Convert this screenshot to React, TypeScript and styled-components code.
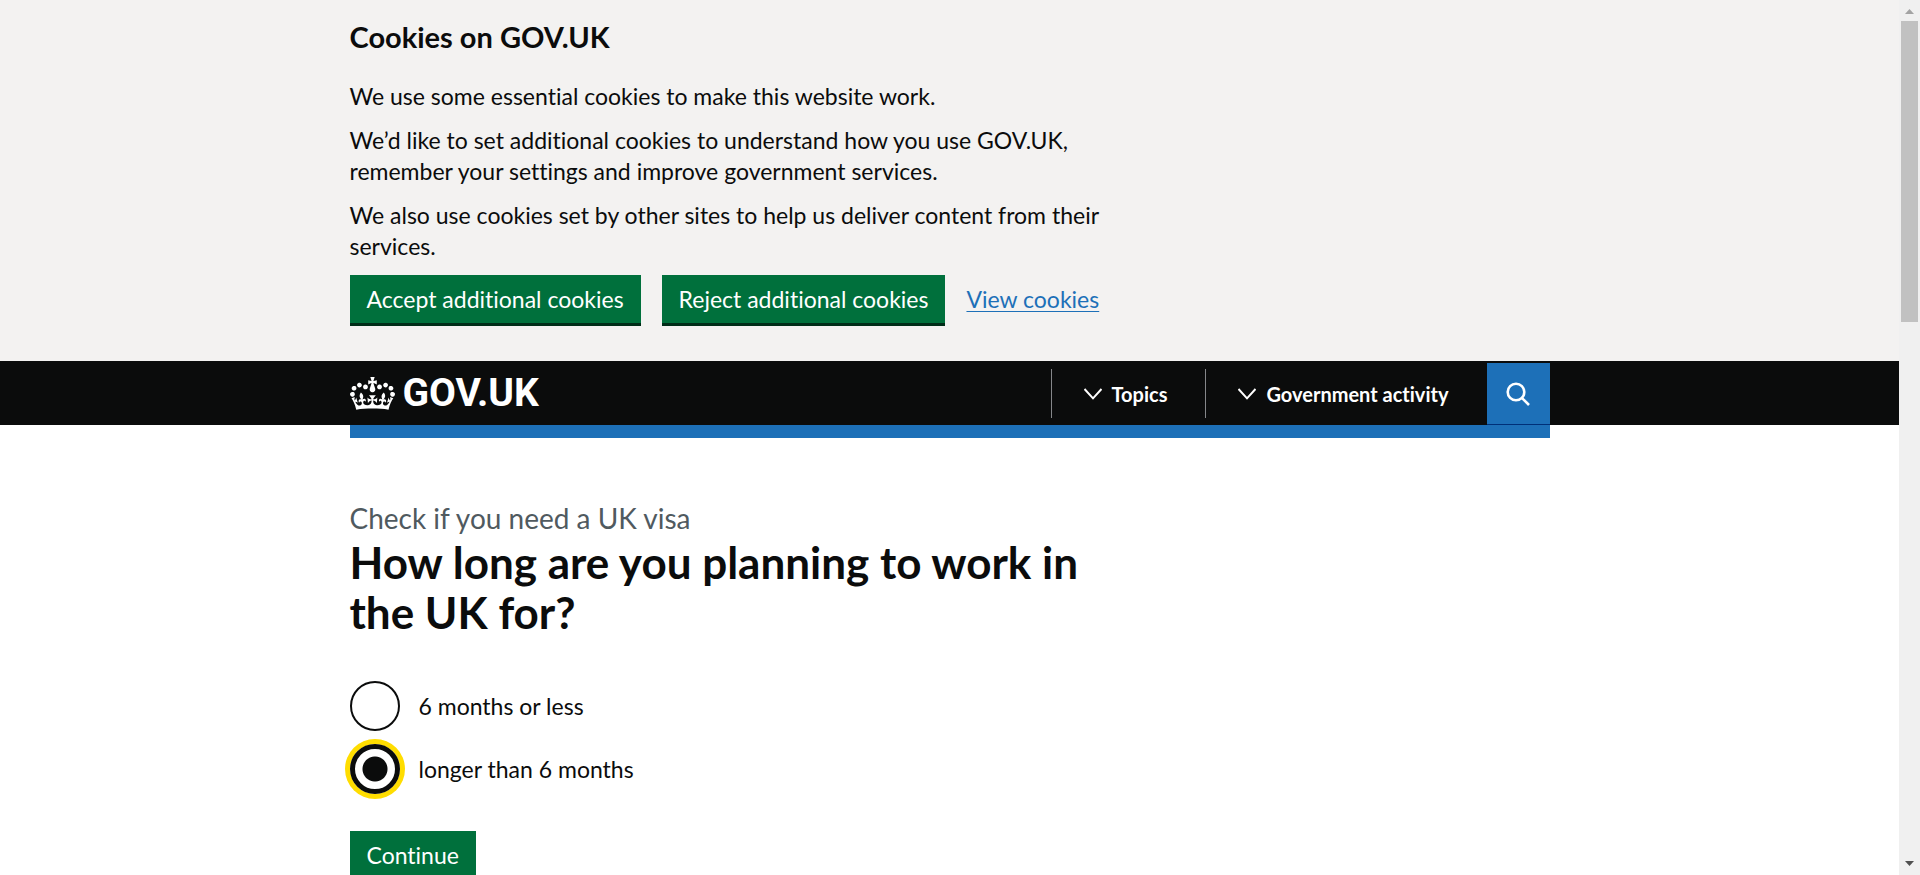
import React, { useState } from 'react';
import styled, { createGlobalStyle, css } from 'styled-components';

const colour = {
  black: '#0b0c0c',
  blue: '#1d70b8',
  green: '#00703c',
  grey: '#f3f2f1',
  secondary: '#505a5f',
  focus: '#ffdd00',
};

const GlobalStyle = createGlobalStyle`
  *, *::before, *::after { box-sizing: border-box; }
  body {
    margin: 0;
    color: ${colour.black};
    background: #fff;
    font-family: Lato, "Liberation Sans", sans-serif;
    font-size: 23px;
    line-height: 31px;
    font-variant-ligatures: none;
  }
`;

const Shell = styled.div`
  display: flex;
  height: 100vh;
  overflow: hidden;
`;

const Page = styled.div`
  flex: 1;
  min-width: 0;
  overflow: hidden;
`;

const Container = styled.div`
  max-width: 1200px;
  margin: 0 auto;
`;

const Banner = styled.section`
  padding: 18px 0 38px;
  background: ${colour.grey};
`;

const BannerText = styled.div`
  max-width: 780px;
`;

const BannerTitle = styled.h2`
  margin: 0 0 25px;
  font-size: 29px;
  line-height: 38px;
`;

const Paragraph = styled.p`
  margin: 0 0 13px;
`;

const ButtonRow = styled.div`
  display: flex;
  align-items: center;
  flex-wrap: wrap;
  gap: 21px;
`;

const Button = styled.button`
  padding: 9px 17px 8px;
  border: 0;
  color: #fff;
  background: ${colour.green};
  box-shadow: 0 3px 0 #002d18;
  font: inherit;
  font-variant-ligatures: none;
  cursor: pointer;
`;

const Link = styled.a`
  color: ${colour.blue};
  text-decoration: underline 1px;
  text-underline-offset: 3px;
`;

const Header = styled.header`
  background: ${colour.black};
`;

const HeaderRow = styled(Container)`
  display: flex;
  align-items: stretch;
  justify-content: space-between;
  height: 64px;
`;

const Logo = styled.a`
  display: flex;
  align-items: center;
  gap: 8px;
  color: #fff;
  font-family: Roboto, "Liberation Sans", sans-serif;
  font-size: 39px;
  line-height: 64px;
  font-weight: 700;
  text-decoration: none;
`;

const Nav = styled.nav`
  display: flex;
  align-items: center;
`;

const NavButton = styled.button`
  display: flex;
  align-items: center;
  gap: 10px;
  height: 49px;
  padding: 2px 38px 0 32px;
  border: 0;
  border-left: 1px solid #85878a;
  color: #fff;
  background: none;
  font: inherit;
  font-variant-ligatures: none;
  font-size: 20px;
  font-weight: 700;
  cursor: pointer;
`;

const SearchButton = styled.button`
  display: flex;
  align-items: center;
  justify-content: center;
  align-self: stretch;
  width: 63px;
  margin-top: 2px;
  padding: 0;
  border: 0;
  border-bottom: 1px solid #003078;
  background: ${colour.blue};
  cursor: pointer;
`;

const BlueBar = styled(Container)`
  height: 13px;
  background: ${colour.blue};
`;

const Main = styled.main`
  padding: 61px 0 75px;
`;

const Question = styled.form`
  max-width: 780px;
`;

const Caption = styled.span`
  display: block;
  color: ${colour.secondary};
  font-size: 28px;
  line-height: 38px;
`;

const Title = styled.h1`
  margin: 0 0 44px;
  font-size: 44px;
  line-height: 50px;
`;

const Options = styled.div`
  display: flex;
  flex-direction: column;
  align-items: flex-start;
  gap: 13px;
  margin-bottom: 37px;
`;

const Option = styled.label`
  display: flex;
  align-items: center;
  gap: 19px;
  cursor: pointer;
`;

const chosen = css`
  border-width: 5px;
  box-shadow: 0 0 0 5px ${colour.focus};
  background: radial-gradient(circle, ${colour.black} 12px, #fff 13px);
`;

const Radio = styled.input<{ $chosen: boolean }>`
  appearance: none;
  width: 50px;
  height: 50px;
  margin: 0;
  border: 2px solid ${colour.black};
  border-radius: 50%;
  outline: 0;
  background: #fff;
  cursor: pointer;
  ${(p) => p.$chosen && chosen}
`;

const ScrollTrack = styled.div`
  display: flex;
  flex-direction: column;
  align-items: center;
  flex: 0 0 21px;
  background: #f0f0f0;
`;

const ScrollThumb = styled.div`
  width: 17px;
  height: 301px;
  margin-bottom: auto;
  background: #c1c1c1;
`;

const Arrow = styled.svg`
  width: 21px;
  height: 21px;
`;

const Crown = () => (
  <svg width="45" height="33" viewBox="0 0 132 97" fill="#fff" aria-hidden="true">
    <path d="M25 30.2c3.5 1.5 7.7-.2 9.1-3.7 1.5-3.6-.2-7.8-3.9-9.2-3.6-1.4-7.6.3-9.1 3.9-1.4 3.5.3 7.5 3.9 9zM9 39.5c3.6 1.5 7.8-.2 9.2-3.7 1.5-3.6-.2-7.8-3.9-9.1-3.6-1.5-7.6.2-9.1 3.8-1.4 3.5.3 7.5 3.8 9zM4.4 57.2c3.5 1.5 7.7-.2 9.1-3.8 1.5-3.6-.2-7.7-3.9-9.1-3.5-1.5-7.6.3-9.1 3.8-1.4 3.5.3 7.6 3.9 9.1zm38.3-21.4c3.5 1.5 7.7-.2 9.1-3.8 1.5-3.6-.2-7.7-3.9-9.1-3.6-1.5-7.6.3-9.1 3.8-1.3 3.6.4 7.7 3.9 9.1zm64.4-5.6c-3.6 1.5-7.8-.2-9.1-3.7-1.5-3.6.2-7.8 3.8-9.2 3.6-1.4 7.7.3 9.2 3.9 1.3 3.5-.4 7.5-3.9 9zm15.9 9.3c-3.6 1.5-7.7-.2-9.1-3.7-1.5-3.6.2-7.8 3.7-9.1 3.6-1.5 7.7.2 9.2 3.8 1.5 3.5-.3 7.5-3.8 9zm4.7 17.7c-3.6 1.5-7.8-.2-9.2-3.8-1.5-3.6.2-7.7 3.9-9.1 3.6-1.5 7.7.3 9.2 3.8 1.3 3.5-.4 7.6-3.9 9.1zM89.3 35.8c-3.6 1.5-7.8-.2-9.2-3.8-1.4-3.6.2-7.7 3.9-9.1 3.6-1.5 7.7.3 9.2 3.8 1.4 3.6-.3 7.7-3.9 9.1zM69.7 17.7l8.9 4.7V9.3l-8.9 2.8c-.2-.3-.5-.6-.9-.9L72.4 0H59.6l3.5 11.2c-.3.3-.6.5-.9.9l-8.8-2.8v13.1l8.8-4.7c.3.3.6.7.9.9l-5 15.4v.1c-.2.8-.4 1.6-.4 2.4 0 4.1 3.1 7.5 7 8.1h.2c.3 0 .7.1 1 .1.4 0 .7 0 1-.1h.2c4-.6 7.1-4.1 7.1-8.1 0-.8-.1-1.7-.4-2.4V34l-5.1-15.4c.4-.2.7-.6 1-.9zM66 92.8c16.9 0 32.8 1.1 47.1 3.2 4-16.9 8.9-26.7 14-33.5l-9.6-3.4c1 4.9 1.1 7.2 0 10.2-1.5-1.4-3-4.3-4.2-8.7L108.6 76c2.8-2 5-3.2 7.5-3.3-4.4 9.4-10 11.9-13.6 11.2-4.3-.8-6.3-4.6-5.6-7.9 1-4.7 5.7-5.9 8-.5 4.3-8.7-3-11.4-7.6-8.8 7.1-7.2 7.9-13.5 2.1-21.1-8 6.1-8.1 12.3-4.5 20.8-4.7-5.4-12.1-2.5-9.5 6.2 3.4-5.2 7.9-2 7.2 3.1-.6 4.3-6.4 7.8-13.5 7.2-10.3-.9-10.9-8-11.2-13.8 2.5-.5 7.1 1.8 11 7.3L80.2 60c-4.1 4.4-8 5.3-12.3 5.4 1.4-4.4 8-11.6 8-11.6H55.5s6.4 7.2 7.9 11.6c-4.2-.1-8-1-12.3-5.4l1.4 16.4c3.9-5.5 8.5-7.7 10.9-7.3-.3 5.8-.9 12.8-11.1 13.8-7.2.6-12.9-2.9-13.5-7.2-.7-5 3.8-8.3 7.1-3.1 2.7-8.7-4.6-11.6-9.4-6.2 3.7-8.5 3.6-14.7-4.6-20.8-5.8 7.6-5 13.9 2.2 21.1-4.7-2.6-11.9.1-7.7 8.8 2.3-5.5 7.1-4.2 8.1.5.7 3.3-1.3 7.1-5.7 7.9-3.5.7-9-1.8-13.5-11.2 2.5.1 4.7 1.3 7.5 3.3l-4.7-15.4c-1.2 4.4-2.7 7.2-4.3 8.7-1.1-3-.9-5.3 0-10.2l-9.5 3.4c5 6.9 9.9 16.7 14 33.5 14.8-2.1 30.8-3.2 47.7-3.2z" />
  </svg>
);

const Chevron = () => (
  <svg width="18" height="12" viewBox="0 0 18 12" fill="none" stroke="#fff" strokeWidth="2" aria-hidden="true">
    <path d="M0.500 1l8.500 9.300 8.500-9.300" />
  </svg>
);

const SearchIcon = () => (
  <svg width="24" height="24" viewBox="0 0 24 24" fill="none" stroke="#fff" strokeWidth="2.6" aria-hidden="true">
    <circle cx="10" cy="10" r="8.3" />
    <path d="M15.8 15.8l7.2 7.2" />
  </svg>
);

const durations = ['6 months or less', 'longer than 6 months'];

export default function App() {
  const [duration, setDuration] = useState(durations[1]);

  return (
    <>
      <GlobalStyle />
      <Shell>
        <Page>
          <Banner aria-label="Cookies on GOV.UK">
            <Container>
              <BannerText>
                <BannerTitle>Cookies on GOV.UK</BannerTitle>
                <Paragraph>We use some essential cookies to make this website work.</Paragraph>
                <Paragraph>
                  We’d like to set additional cookies to understand how you use GOV.UK, remember your settings and
                  improve government services.
                </Paragraph>
                <Paragraph>
                  We also use cookies set by other sites to help us deliver content from their services.
                </Paragraph>
              </BannerText>
              <ButtonRow>
                <Button type="button">Accept additional cookies</Button>
                <Button type="button">Reject additional cookies</Button>
                <Link href="#cookies">View cookies</Link>
              </ButtonRow>
            </Container>
          </Banner>

          <Header>
            <HeaderRow>
              <Logo href="#home">
                <Crown />
                GOV.UK
              </Logo>
              <Nav aria-label="Navigation menu">
                <NavButton type="button">
                  <Chevron />
                  Topics
                </NavButton>
                <NavButton type="button">
                  <Chevron />
                  Government activity
                </NavButton>
                <SearchButton type="button" aria-label="Search GOV.UK">
                  <SearchIcon />
                </SearchButton>
              </Nav>
            </HeaderRow>
          </Header>
          <BlueBar />

          <Main>
            <Container>
              <Question onSubmit={(e) => e.preventDefault()}>
                <Caption>Check if you need a UK visa</Caption>
                <Title id="question">How long are you planning to work in the UK for?</Title>
                <Options role="radiogroup" aria-labelledby="question">
                  {durations.map((d) => (
                    <Option key={d}>
                      <Radio
                        type="radio"
                        name="duration"
                        value={d}
                        checked={d === duration}
                        $chosen={d === duration}
                        onChange={() => setDuration(d)}
                      />
                      {d}
                    </Option>
                  ))}
                </Options>
                <Button type="submit">Continue</Button>
              </Question>
            </Container>
          </Main>
        </Page>

        <ScrollTrack aria-hidden="true">
          <Arrow viewBox="0 0 21 21" fill="#a3a3a3">
            <path d="M6 14l4.500-5 4.500 5z" />
          </Arrow>
          <ScrollThumb />
          <Arrow viewBox="0 0 21 21" fill="#505050">
            <path d="M6 7l4.500 5 4.500-5z" />
          </Arrow>
        </ScrollTrack>
      </Shell>
    </>
  );
}
